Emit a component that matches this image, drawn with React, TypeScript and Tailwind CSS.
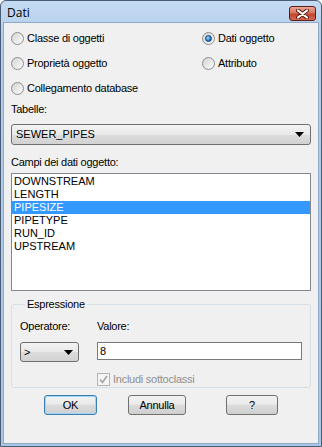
import React, { useState } from 'react';

type RadioProps = { label: string; checked?: boolean; onClick?: () => void };

const Radio: React.FC<RadioProps> = ({ label, checked, onClick }) => (
  <div className="flex items-center gap-[3px] cursor-default" onClick={onClick}>
    <span className="w-[13px] h-[13px] rounded-full border border-[#8d8d8d] bg-[linear-gradient(135deg,#d4d4d4,#fbfbfb)] flex items-center justify-center shrink-0">
      {checked && (
        <span className="w-[7px] h-[7px] rounded-full border border-[#0d3d6b] bg-[radial-gradient(circle_at_35%_35%,#9fd8ff,#2a7bc4_60%,#124d86)]" />
      )}
    </span>
    <span>{label}</span>
  </div>
);

const Arrow: React.FC = () => (
  <svg width="9" height="5" viewBox="0 0 9 5" className="shrink-0">
    <path d="M0 0 H9 L4.5 5 Z" fill="#000" />
  </svg>
);

const btn =
  'h-[20px] rounded-[3px] border text-[11px] flex items-center justify-center bg-[linear-gradient(#f2f2f2_0%,#ebebeb_45%,#dddddd_50%,#cfcfcf_100%)]';

const App: React.FC = () => {
  const [source, setSource] = useState('dati');
  const [selected, setSelected] = useState('PIPESIZE');
  const [value, setValue] = useState('8');
  const fields = ['DOWNSTREAM', 'LENGTH', 'PIPESIZE', 'PIPETYPE', 'RUN_ID', 'UPSTREAM'];

  return (
    <div
      className="w-[322px] h-[447px] flex flex-col rounded-t-[6px] border border-[#4a5d75] bg-[linear-gradient(#c4dbf3,#b3cdea_8%,#a9c6e6)] text-[11px] tracking-[-0.25px] text-black overflow-hidden"
      style={{ fontFamily: '"Liberation Sans", Arial, sans-serif' }}
    >
      {/* title bar */}
      <div className="h-[21px] flex items-center justify-between pl-[6px] pr-[5px] shrink-0">
        <span className="text-[12px] pt-[2px] tracking-normal" style={{ fontFamily: '"Open Sans", "Liberation Sans", sans-serif' }}>Dati</span>
        <button className="w-[27px] h-[15px] mt-[4px] rounded-[3px] border border-[#5c1f17] bg-[linear-gradient(#e9a594,#d7755f_45%,#c0452d_55%,#d86a50)] flex items-center justify-center">
          <svg width="13" height="10" viewBox="0 0 13 10">
            <path d="M2 1.5 L11 8.5 M11 1.5 L2 8.5" stroke="#5a1a12" strokeWidth="4" strokeLinecap="round" />
            <path d="M2 1.5 L11 8.5 M11 1.5 L2 8.5" stroke="#fff" strokeWidth="2.2" strokeLinecap="round" />
          </svg>
        </button>
      </div>

      {/* body */}
      <div className="flex-1 mx-[2px] mb-[2px] bg-[#f0f0f0] border border-[#8fa9c6] px-[7px] flex flex-col">
        <div className="grid grid-cols-[191px_1fr] grid-rows-[25px_25px_25px] items-center pt-[3px]">
          <Radio label="Classe di oggetti" checked={source === 'classe'} onClick={() => setSource('classe')} />
          <Radio label="Dati oggetto" checked={source === 'dati'} onClick={() => setSource('dati')} />
          <Radio label="Proprietà oggetto" checked={source === 'prop'} onClick={() => setSource('prop')} />
          <Radio label="Attributo" checked={source === 'attr'} onClick={() => setSource('attr')} />
          <Radio label="Collegamento database" checked={source === 'db'} onClick={() => setSource('db')} />
        </div>

        <div className="h-[14px] leading-[14px] mt-[1px]">Tabelle:</div>
        <div className="mt-[8px] h-[21px] rounded-[3px] border border-[#707070] bg-[linear-gradient(#f3f3f3,#e9e9e9_50%,#dcdcdc_52%,#d2d2d2)] flex items-center justify-between pl-[4px] pr-[6px] shrink-0">
          <span className="tracking-normal">SEWER_PIPES</span>
          <Arrow />
        </div>

        <div className="h-[14px] leading-[14px] mt-[10px]">Campi dei dati oggetto:</div>
        <div className="mt-[4px] h-[118px] bg-white border border-[#828790] py-[1px] shrink-0">
          {fields.map((f) => (
            <div
              key={f}
              onClick={() => setSelected(f)}
              className={`h-[13px] leading-[13px] pl-[2px] tracking-normal ${
                selected === f ? 'bg-[#3399ff] text-white' : ''
              }`}
            >
              {f}
            </div>
          ))}
        </div>

        <fieldset className="mt-[7px] h-[90px] border border-[#d5dfe5] rounded-[3px] px-[8px] shrink-0">
          <legend className="ml-[5px] px-[2px] leading-[13px]">Espressione</legend>
          <div className="flex mt-[9px]">
            <div className="w-[77px] flex flex-col">
              <span className="h-[13px] leading-[13px]">Operatore:</span>
              <div className="mt-[9px] w-[59px] h-[20px] rounded-[3px] border border-[#707070] bg-[linear-gradient(#f3f3f3,#e9e9e9_50%,#dcdcdc_52%,#d2d2d2)] flex items-center justify-between pl-[3px] pr-[5px]">
                <span>&gt;</span>
                <Arrow />
              </div>
            </div>
            <div className="flex-1 flex flex-col">
              <span className="h-[13px] leading-[13px]">Valore:</span>
              <input
                value={value}
                onChange={(e) => setValue(e.target.value)}
                className="mt-[9px] w-[205px] h-[18px] bg-white border border-[#7a7a7a] px-[2px] text-[11px] outline-none"
              />
              <div className="flex items-center gap-[3px] mt-[11px] text-[#8f8f8f]">
                <span className="w-[13px] h-[13px] border border-[#b5b5b5] bg-[#f4f4f4] flex items-center justify-center">
                  <svg width="9" height="9" viewBox="0 0 9 9">
                    <path d="M1 4.5 L3.5 7.5 L8 1" stroke="#a4a4a4" strokeWidth="1.6" fill="none" />
                  </svg>
                </span>
                <span>Includi sottoclassi</span>
              </div>
            </div>
          </div>
        </fieldset>

        <div className="flex mt-[7px] pl-[33px]">
          <button className={`${btn} w-[53px] border-[#3c7fb1] shadow-[inset_0_0_0_1px_#9fd5f6]`}>OK</button>
          <button className={`${btn} w-[58px] ml-[31px] border-[#707070]`}>Annulla</button>
          <button className={`${btn} w-[52px] ml-[40px] border-[#707070]`}>?</button>
        </div>
      </div>
    </div>
  );
};

export default App;
